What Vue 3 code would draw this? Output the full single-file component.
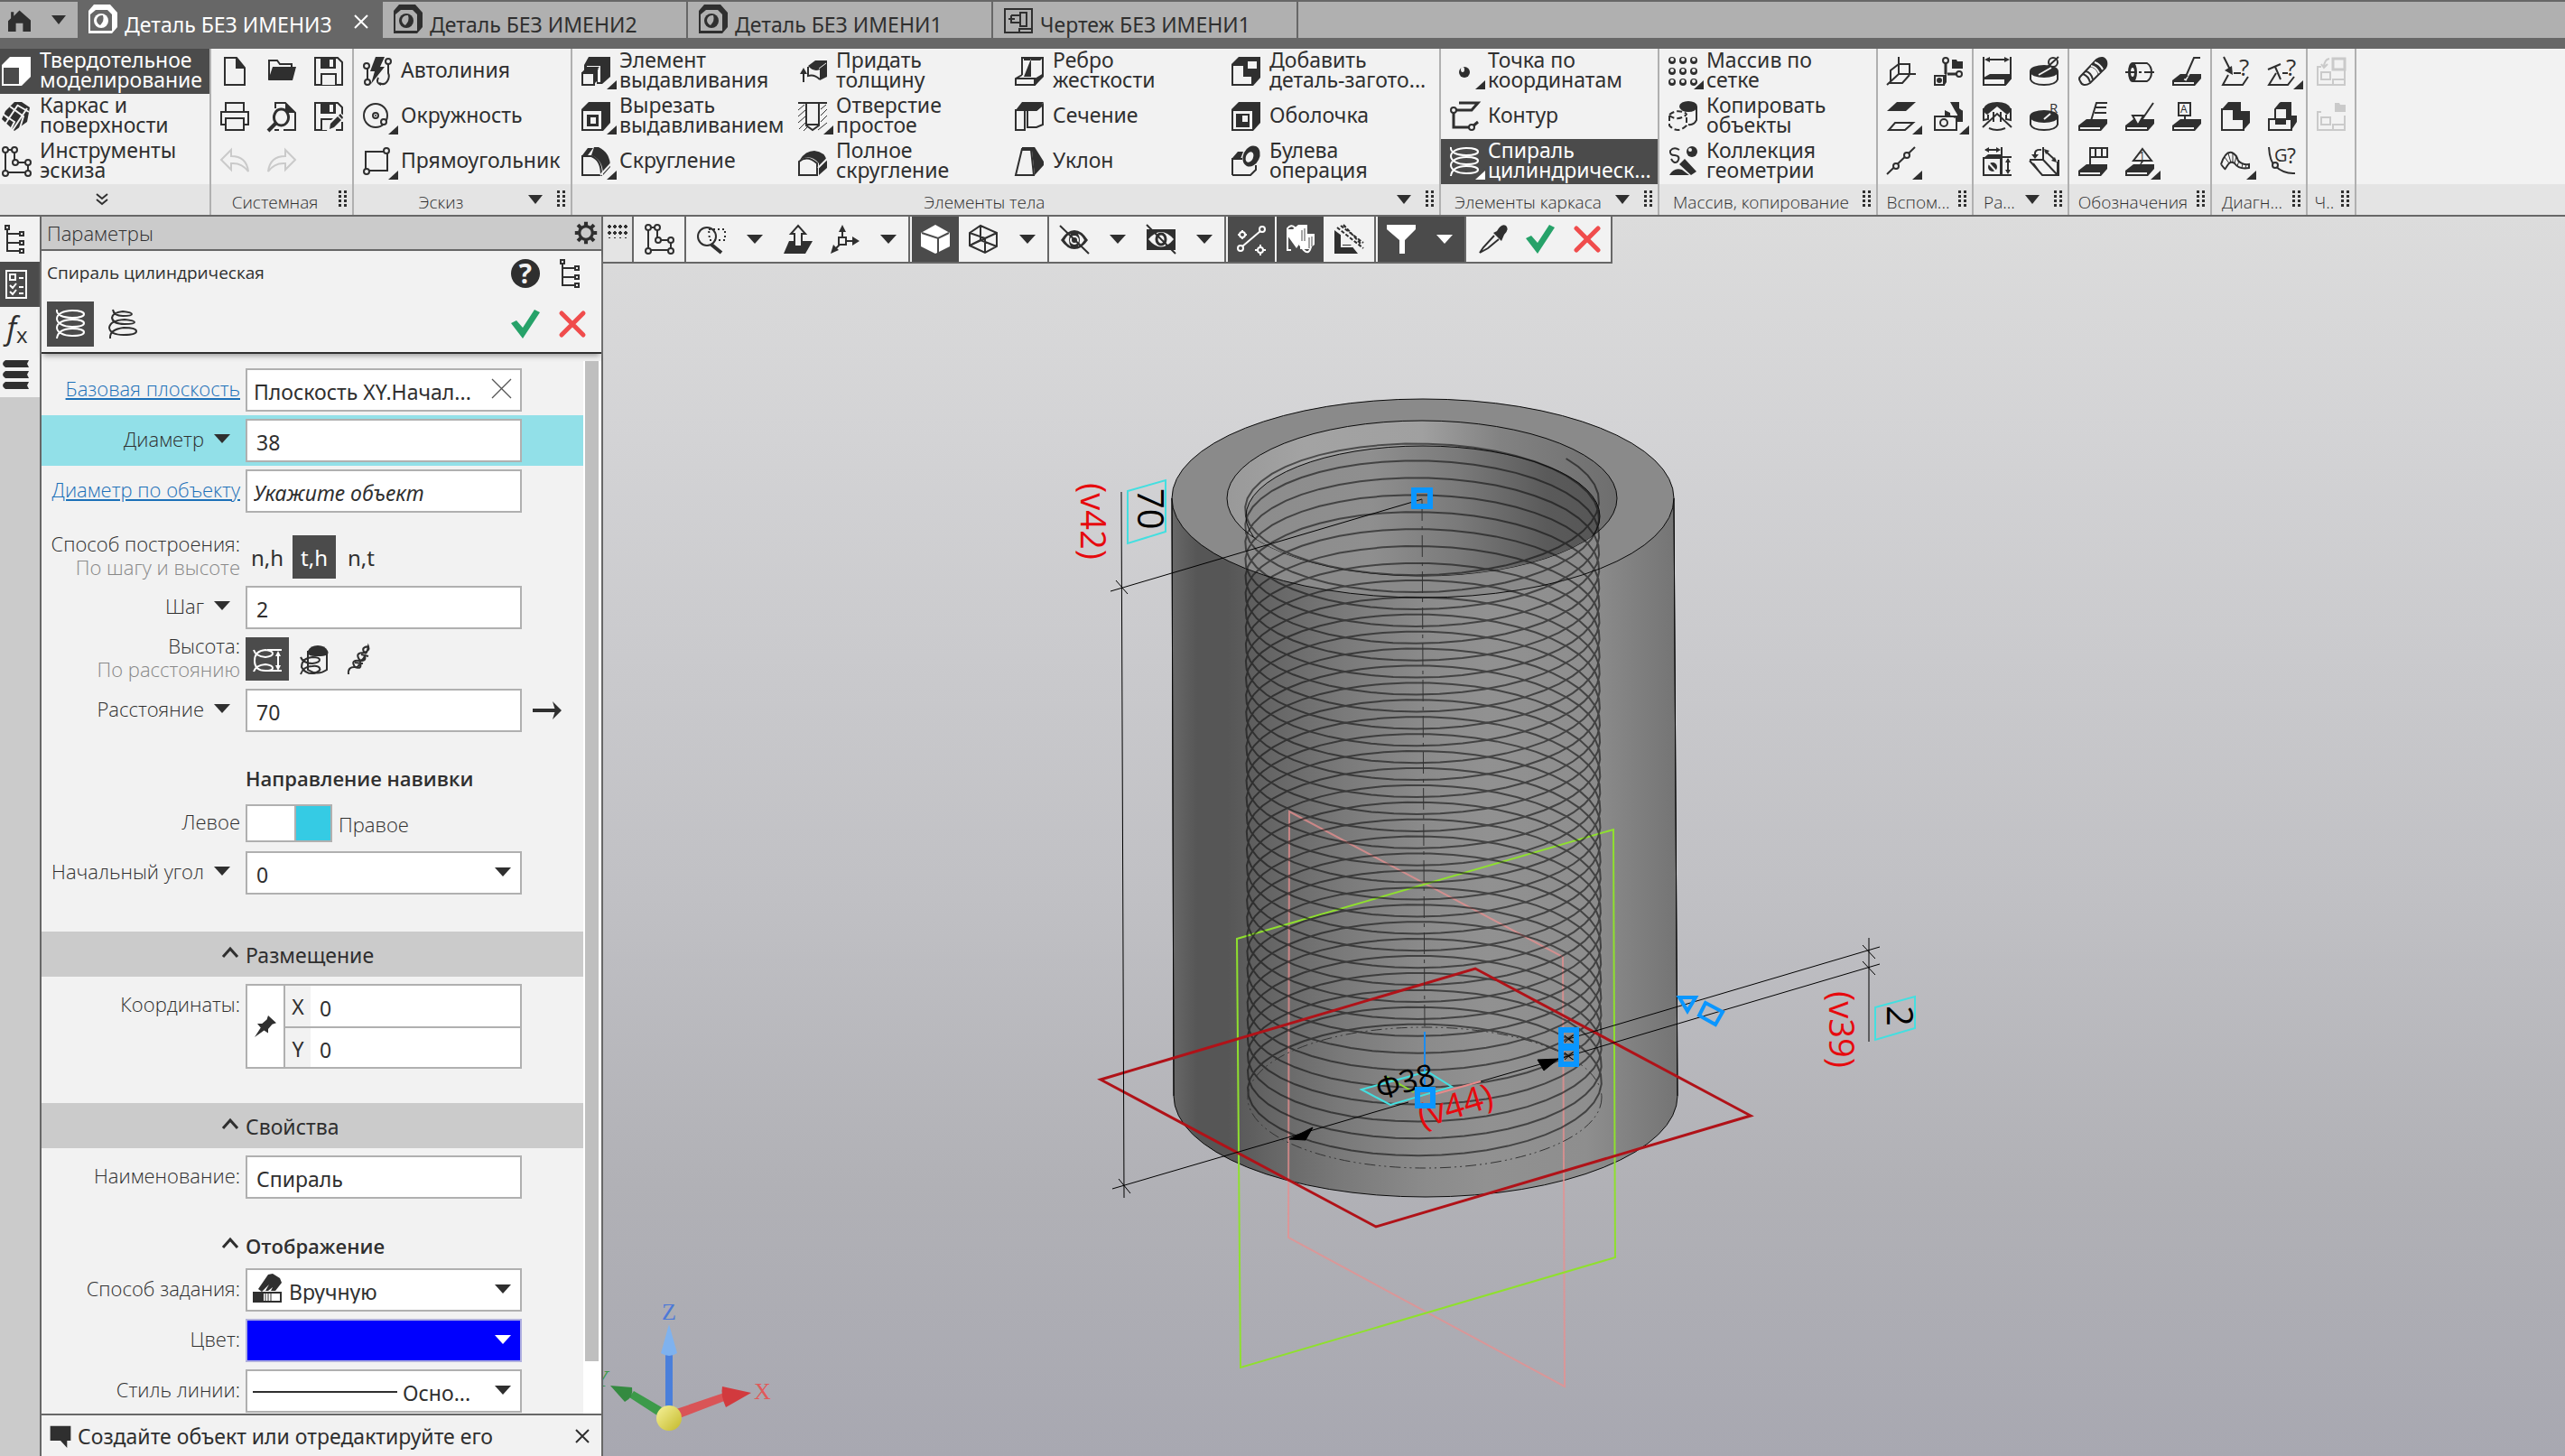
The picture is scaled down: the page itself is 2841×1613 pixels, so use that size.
<script setup>
import { ref } from 'vue'

/* ---- icon drawing helpers, all on a 32 x 32 grid ---- */
const s = (d, w = 2) => `<path d="${d}" stroke-width="${w}"/>`
const f = (d) => `<path d="${d}" fill="currentColor" stroke="none" fill-rule="evenodd"/>`
const b = (d, w = 2) => `<path d="${d}" fill="var(--bg)" stroke-width="${w}"/>`
const w = (d) => `<path d="${d}" fill="var(--bg)" stroke="none"/>`
const l = (d, k = 2) => `<path d="${d}" stroke="var(--bg)" stroke-width="${k}"/>`
const c = (x, y, r = 3) => `<circle cx="${x}" cy="${y}" r="${r}" fill="var(--bg)"/>`
const d = (x, y, r = 3) => `<circle cx="${x}" cy="${y}" r="${r}" fill="currentColor" stroke="none"/>`
const t = (x, y, k, v) => `<text x="${x}" y="${y}" font-size="${k}" fill="currentColor" stroke="none" font-family="Open Sans, sans-serif">${v}</text>`
const plate = f('M0 26L9 19H32V24L25 32H0z') + w('M2 28H24V30H2z')
const spiral = s('M1 0C0 6 8 9 18 9C27 9 31 7 31 5S27 1 18 1C8 1 1 5 1 10S8 19 18 19S31 17 31 15S27 11 18 11C8 11 1 15 1 20S8 29 18 29S31 27 31 25S27 21 18 21C8 21 2 24 1 32')
const sketch = s('M4 3H14V17L17 17H29V28H4z') + c(4, 3) + c(14, 3) + c(15, 17) + c(29, 17) + c(29, 29) + c(4, 29)
const floppy = s('M1 1H26L31 6V31H1z') + f('M7 1H24V13H7z') + w('M17 3H21V11H17z') + b('M8 31V19H24V31')
const sheet = s('M1 10V31H31V15M1 11H5M18 31V25H31') + s('M5 17H15V25H5z')
const chest = f('M8 0H32V23L24 32H0V8z')

const icons = {
  home: f('M16 2L8 10V4H4V13L0 17V32H11V20H21V32H32V16z'),
  part: f('M6 0H24L32 9V25L26 32H0V7z') + w('M2 11L8 6H21L26 11V29H2z') + d(14, 18, 8) + w('M9 17A6 6 0 0 1 16 12Q18 18 13 23Q9 21 9 17z'),
  drawing: s('M1 5H31V31H1z') + s('M5 16H12M8 12H18V20H8V12M18 9H25V24H18zM17 31V27H31'),
  solid: f('M9 0H32V22L22 32H0V9z') + w('M2 12H19V30H2z'),
  surface: f('M14 0L22 0L31 6L28 22L14 32L0 19L4 10z') + l('M9 5L24 16L20 29M2 14L14 22L10 30M30 11L18 4M4 24L18 3M12 31L28 7M0 12L8 19'),
  sketch,
  file: s('M5 1H18L27 12V31H5z') + f('M17 1L28 13H17z'),
  folder: s('M2 25V4H11L14 8H27V13') + f('M4 26L1 26L6 11H32L28 26z'),
  save: floppy,
  saveas: floppy + w('M14 32L16 23L28 11L34 16V32z') + f('M17 30L18 24L26 16L30 20L22 28zM27 15L29 13L32 17L31 19z') + s('M31 22V31H24'),
  print: s('M6 11V1H26V11M6 25H1V11H31V25H26') + s('M6 18H26V31H6z'),
  preview: s('M9 7V1H20L31 12V31H18M8 31H13') + f('M20 1L31 12H20z') + b('M16 8A8 9 0 1 1 15 8z', 3) + s('M10 23L1 32', 4),
  undo: s('M12 3L1 14L12 25V18Q24 17 31 27Q29 10 12 10z'),
  redo: s('M20 3L31 14L20 25V18Q8 17 1 27Q3 10 20 10z'),
  autoline: s('M5 8L5 27M5 27Q5 30 9 28M28 6V18Q30 22 27 27Q24 32 18 29') + f('M14 0H24L19 11H24L9 30L13 16H8z') + c(4, 10, 3) + c(5, 28, 3) + c(28, 5, 3) + s('M17 23Q14 29 20 31'),
  circle: `<circle cx="14" cy="15" r="13"/>` + c(14, 15, 3) + d(14, 15, 1) + c(23, 22, 3),
  rect: s('M3 5H27V26H3z') + c(26, 4, 3) + c(4, 27, 3),
  extrude: f('M8 0H32V22L23 30H17V15H3V9z') + w('M6 10H21V28H18V13L20 11H6z') + b('M1 18L5 14H17L14 18V31H1z') + f('M1 18L6 13H18V26L14 30V18z') + s('M1 18H14V31H1z'),
  cut: chest + w('M2 10H22V30H2z') + f('M6 14H19V27H6z') + w('M10 17H16V24H10z'),
  fillet: s('M1 31V10H11Q22 14 22 31z') + f('M1 9L7 1H13L7 9zM14 0H19Q32 6 32 22L24 31Q24 14 11 9z') + l('M21 31L33 18', 2),
  thicken: s('M6 28V16') + f('M6 12L10 19H2z') + f('M11 10L19 4H32V22L24 26V14Q17 17 11 10z') + s('M11 11V21Q18 19 24 25') + l('M23 13L31 7', 1),
  hole: s('M0 1H32', 2) + s('M9 1V26L16 31L23 26V1M9 25H23', 2) + s('M0 9L7 3M0 16L8 9M0 23L8 16M1 30L9 22M6 32L10 28M25 8L31 3M25 15L32 8M25 22L32 15M22 31L32 23', 1),
  fullround: s('M1 31V16Q10 8 21 18V31z') + f('M2 14Q8 4 18 4Q30 5 32 16V23L23 31V18Q14 7 2 14z') + l('M22 23L33 12'),
  rib: s('M8 20V1H31V20L22 31H1V24L8 20M1 24H22V31') + f('M22 24L32 18V22L22 32zM18 2L10 22H18zM10 1H31L28 4H10z'),
  section: s('M1 9H11V31H1zM14 9H24L31 3V25L24 28H14z') + f('M1 9L8 0H32L25 9H16L14 10H11z'),
  draft: s('M8 2L1 31H21L18 3z') + f('M8 0H22L32 16V20L22 31L19 4H8z'),
  addpart: chest + w('M2 10H13V22H22V30H2zM18 5H28V13H18z') + f('M13 9H17V17H22V22H13z'),
  shell: chest + w('M2 10H23V30H2z') + f('M5 13H20V28H5z') + w('M12 15H18V22H12z'),
  boolean: s('M1 31V13H12M1 31H21L27 25V20') + f('M1 12L7 5H13L10 13z') + `<ellipse cx="22" cy="10" rx="8" ry="11" transform="rotate(25 22 10)" fill="currentColor"/><ellipse cx="20" cy="11" rx="4" ry="6" transform="rotate(25 20 11)" fill="var(--bg)" stroke="none"/>`,
  point: d(16, 17, 6) + `<ellipse cx="14" cy="14" rx="2" ry="3" fill="var(--bg)" stroke="none"/>`,
  contour: s('M10 1H31L24 9H4V28H25M24 28L31 22', 3) + c(4, 9, 3) + c(24, 28, 3),
  spiral,
  array: [4, 16, 28].map((y) => [4, 16, 28].map((x) => d(x, y, 4) + `<circle cx="${x}" cy="${y - 1}" r="2" fill="var(--bg)" stroke="none"/>`).join('')).join(''),
  copy: `<path d="M1 15V26Q10 36 20 26V13M1 14Q10 7 20 13M1 15Q10 22 20 14" stroke-dasharray="6 3"/>` + s('M31 5V20Q28 26 22 25') + `<ellipse cx="22" cy="5" rx="9" ry="5" fill="currentColor"/>`,
  collect: s('M12 3Q6 -1 2 4Q1 9 7 9Q14 10 10 16Q6 19 3 13') + d(26, 5, 6) + `<circle cx="24" cy="3" r="2" fill="var(--bg)" stroke="none"/>` + f('M12 19L18 13L31 27L25 31zM1 31Q6 22 15 25L23 31z'),
  lcs: s('M13 0V19L0 31M13 19H32M13 8H25V19M13 8L4 15V29H17L25 20', 2),
  csys: s('M13 7V19M15 19H25', 3) + c(13, 4, 3) + c(28, 19, 3) + s('M1 21H11V31H1z') + d(6, 26, 3) + f('M20 3H25L26 5H32V13H20zM12 20L14 18V28L12 31z'),
  plane: f('M11 0H32L21 10H0z') + s('M9 23H29L20 31H2z'),
  camera: f('M18 0H28V7L32 10V21H26V14L23 9zM12 9L18 12V15H12z') + f('M12 10L23 18L32 9V22H24V15H12z') + s('M1 16H25V31H1z') + `<circle cx="11" cy="23" r="4"/>`,
  axis: s('M0 30L31 0') + c(10, 21, 3) + c(22, 9, 3),
  dimlin: s('M1 0V31H25L31 24V0M4 3H28M1 24H25V31') + f('M1 23L8 19H32L25 25H1zM25 25L32 19V24L26 31zM2 3L8 0V6zM30 3L24 0V6z'),
  dimdia: s('M1 16V25Q3 31 16 31Q29 31 31 25V16') + `<ellipse cx="16" cy="16" rx="15" ry="6" fill="currentColor"/><circle cx="26" cy="6" r="5"/>` + s('M20 11L32 0') + l('M10 20L24 12'),
  dimang: f('M1 7Q4 0 16 0Q28 0 31 7Q31 12 27 14L16 5L5 14Q0 11 1 7z') + s('M1 7V20L6 19V14M31 7V20L26 19V14M12 11V22M20 11V22') + s('M0 28L16 13L32 28M7 29Q16 33 25 29'),
  dimrad: s('M1 16V25Q3 31 16 31Q29 31 31 25V16') + `<ellipse cx="16" cy="16" rx="15" ry="6" fill="currentColor"/>` + t(22, 12, 15, 'R') + l('M16 19L23 13'),
  dimbox: s('M1 11V31H21V12H1', 2) + f('M1 12L6 8H22V31H19V13H1z') + s('M21 0V31M21 11H32M21 31H32M3 3H18M28 13V28') + f('M2 3L7 0V6zM20 3L15 0V6zM28 12L25 17H31zM28 30L25 25H31z') + d(11, 22, 5) + l('M6 17L16 28'),
  dim3: s('M15 0V14L31 31M15 14H0M0 15L14 31H32V14M31 16V31M17 4L29 15M4 18L12 29M13 3Q5 2 6 9') + f('M2 8H10L6 13zM16 2L22 4L18 8zM30 17L28 11L24 15z'),
  thread: s('M2 22L20 3Q28 -2 31 5Q32 9 30 12L13 29Q5 34 2 27Q0 24 2 22z') + f('M12 11L20 3Q28 -2 31 5Q32 9 30 12L22 20Q20 12 12 11z') + l('M14 10Q20 11 23 18M18 6Q24 8 27 14') + s('M8 16Q14 17 16 25M5 19Q11 21 13 28'),
  cylaxis: s('M8 7H24Q29 10 29 17Q29 24 24 27H8') + `<ellipse cx="8" cy="17" rx="4" ry="10" fill="currentColor"/><ellipse cx="8" cy="17" rx="2" ry="5" fill="var(--bg)" stroke="none"/>` + s('M0 17H12M15 17H18M21 17H32'),
  leader: plate + l('M14 26L20 15', 3) + s('M31 1H24L14 24') + f('M11 26L13 19L18 21z'),
  brand: plate + s('M13 24L20 1H32M19 6H31M18 12H31') + f('M11 26L12 19L17 21z'),
  rough: plate + b('M8 15H20L14 26z') + s('M14 26L31 1'),
  base: plate + b('M7 1H20V15H7z') + t(9, 12, 12, 'A') + s('M14 15V21') + f('M14 20L22 25H6z'),
  tolerance: plate + b('M13 1H32V11H13zM19 1V11M26 1V11') + s('M13 11V23') + f('M13 20L22 25H5z'),
  marking: plate + b('M19 2L29 15H9z') + t(15, 14, 12, '1') + f('M12 27L13 20L18 22zM15 22L20 16L18 15z'),
  check1: s('M8 20L2 31H24L30 22M3 0L11 16M14 18H22') + f('M13 20L12 10L4 15z') + t(20, 21, 26, '?'),
  check2: s('M9 18L1 31H22L29 22M0 14L14 8M8 11L14 25M16 18H22') + t(20, 21, 26, '?'),
  lbox: s('M1 8H14V19H25V31H1z') + f('M1 8L8 0H22V10H32V23L25 31V18H14V8z'),
  ubox: s('M1 19H26V31H1z') + s('M8 19V8L14 1') + f('M8 8L14 0H26V15H32V22L26 31V19H20V8z') + f('M8 19H20V25H8z') + w('M10 8H18V18H10z'),
  zebra: s('M0 19Q5 4 12 6Q17 8 19 15Q24 20 31 19V23Q20 25 15 18Q11 15 8 19L4 25M0 19L4 24', 2) + s('M4 11L9 18M8 7L11 17M13 6L13 17M17 10L15 18M20 15L18 21M24 18L23 23M28 19L27 23', 1),
  gcheck: s('M1 0Q2 16 8 21Q18 30 30 29') + c(8, 20, 3) + t(7, 16, 20, 'G') + t(21, 18, 23, '?'),
  up1: sheet + s('M18 2H31V14H18z', 3) + s('M14 2Q8 3 8 12M5 8L8 12L12 8'),
  up2: sheet + f('M20 1H25L26 3H32V11H20z'),
  tree: s('M5 4V29H20M5 10H20M5 20H20') + b('M3 1H7V5H3zM19 8H23V12H19zM19 18H23V22H19zM19 27H23V31H19z'),
  params: s('M4 1H26V31H4z') + s('M8 5H14V11H8zM18 9H23M8 17L11 20L15 15M18 19H23M8 24L11 27L15 22M18 26H23'),
  books: f('M3 0H29L27 4L29 8H3Q0 6 0 4T3 0zM3 12H29L27 16L29 20H3Q0 18 0 16T3 12zM3 24H29L27 28L29 32H3Q0 30 0 28T3 24z'),
  gear: `<circle cx="16" cy="16" r="9" stroke-width="4"/>` + s('M16 1V6M16 26V31M1 16H6M26 16H31M5 5L9 9M23 23L27 27M5 27L9 23M23 9L27 5', 5),
  help: d(16, 16, 16) + `<text x="16" y="27" text-anchor="middle" font-size="30" font-weight="700" fill="var(--bg)" stroke="none" font-family="Open Sans, sans-serif">?</text>`,
  cone: s('M5 0Q6 7 16 7Q26 7 26 5T16 2Q5 3 4 9Q5 16 18 16Q29 16 29 14T18 11Q2 12 1 20Q2 28 17 28Q31 28 31 24T17 20Q1 22 2 32'),
  ok: `<path d="M0 15L6 12L13 20L26 0L32 3L13 32z" fill="#26a269" stroke="none"/>`,
  cancel: `<path d="M4 4L28 28M28 4L4 28" stroke="#f04c4c" stroke-width="5" stroke-linecap="round"/>`,
  hdist: s('M1 5Q3 12 14 13Q22 12 22 9T14 5Q2 6 2 17T14 28Q22 28 22 25T14 21Q3 22 1 29M16 5H32M16 28H32M28 9V25') + f('M28 6L31 12H25zM28 28L31 22H25z'),
  hobj: s('M9 6V27Q20 34 30 27V6') + f('M9 6Q12 0 20 0T31 6T20 12T9 6z') + s('M1 13Q4 20 14 20Q22 19 22 16T14 13Q2 14 2 24Q6 32 16 31Q24 28 22 25T14 23Q4 23 1 32'),
  hpath: s('M24 1Q16 2 19 7T24 1Q26 6 19 8Q10 8 13 14T20 12Q22 18 14 17Q5 16 8 22T15 19Q17 27 10 24Q1 23 2 32M16 10L24 12M9 19L18 20'),
  arrow: s('M0 16H28', 4) + f('M22 6L32 16L22 26L25 16z'),
  pin: f('M20 0L32 11L26 13L20 20L20 26L14 22L0 32L9 18L4 12L11 12L18 6z'),
  hand: f('M6 17L17 1L22 0L30 5L32 10L25 19H20L22 15L17 19H14L18 12L10 20z') + s('M1 21H31V31H1z') + f('M1 21H12V31H1z') + s('M14 22V31M17 22V31M20 22V31', 1),
  bubble: f('M2 2H30V22H25V32L16 22H2z'),
  zoom: `<circle cx="11" cy="13" r="10"/>` + s('M16 22L27 31', 4) + `<path d="M13 5H31V17H14z" stroke-dasharray="2 3"/>`,
  place: f('M6 18H32L24 32H0z') + b('M12 24V10H8L16 1L24 10H20V24z'),
  triad: s('M13 15V4M17 18H26M10 22L4 28') + f('M13 0L17 8H9zM32 18L24 13V23zM0 32L3 22L9 28z') + b('M9 14H17V22H9z'),
  cube: f('M16 0L32 9V24L16 32L0 24V9z') + l('M1 9L19 15L31 9M19 15V31'),
  wire: s('M13 1L31 9V24L18 31L1 23V9zM13 1V17L1 23M13 17L31 24M1 9L18 15L31 9M18 15V31M1 23L31 9'),
  hide: f('M1 17Q8 6 16 6T31 17Q24 27 16 27T1 17z') + w('M5 17Q8 11 12 10Q8 17 12 24Q8 22 5 17zM27 17Q24 11 20 10Q24 17 20 24Q24 22 27 17z') + `<circle cx="16" cy="17" r="4" stroke="var(--bg)"/>` + s('M0 1L32 32'),
  hide2: f('M0 5H32V28H0z') + `<path d="M2 16Q16 0 30 16Q16 33 2 16z" fill="var(--bg)" stroke="none"/><ellipse cx="16" cy="16" rx="5" ry="6" stroke-width="3"/>` + s('M0 0L32 32'),
  snap: s('M6 24L26 7') + c(28, 5, 3) + c(4, 26, 3) + c(6, 11, 3) + c(26, 28, 3) + s('M6 6V8M6 14V16M1 11H3M9 11H11M26 22V25M26 31V34M20 28H23M29 28H32'),
  faces: f('M8 5L14 0H24V10H32V22L26 27H16V20L12 26L2 12V5z') + s('M6 28H2V4Q6 -1 10 3V14L20 28Q26 34 28 24') + l('M18 6V18M21 4V18M26 14V26M29 13V24', 1),
  shade: f('M0 6L8 12V22H18L26 32H0z') + l('M8 10V24H20') + `<path d="M3 3L32 26M7 1L32 20M10 0L30 22" stroke-dasharray="4 2"/>`,
  filter: f('M0 0H32V5L20 17V32H14V17L0 5z'),
  pipette: f('M20 7Q25 -2 30 1Q34 5 28 11L25 18L16 9z') + s('M17 12L5 25L1 31L10 26L22 16'),
}

const tabs = [
  { icon: 'part', text: 'Деталь БЕЗ ИМЕНИ3', on: true },
  { icon: 'part', text: 'Деталь БЕЗ ИМЕНИ2' },
  { icon: 'part', text: 'Деталь БЕЗ ИМЕНИ1' },
  { icon: 'drawing', text: 'Чертеж БЕЗ ИМЕНИ1' },
]

const I = (icon, text = '', more = false, on = false) => ({ icon, text, more, on })
const modes = [
  I('solid', 'Твердотельное\nмоделирование', false, true),
  I('surface', 'Каркас и\nповерхности'),
  I('sketch', 'Инструменты\nэскиза'),
]
const groups = [
  { title: 'Системная', kind: 'n3', items: [I('file'), I('folder'), I('save'), I('print'), I('preview'), I('saveas'), I('undo'), I('redo')] },
  { title: 'Эскиз', kind: 'w1', drop: true, items: [I('autoline', 'Автолиния'), I('circle', 'Окружность', true), I('rect', 'Прямоугольник', true)] },
  {
    title: 'Элементы тела', kind: 'w4', drop: true,
    items: [
      I('extrude', 'Элемент\nвыдавливания', true), I('thicken', 'Придать\nтолщину'), I('rib', 'Ребро\nжесткости'), I('addpart', 'Добавить\nдеталь-загото...'),
      I('cut', 'Вырезать\nвыдавливанием', true), I('hole', 'Отверстие\nпростое', true), I('section', 'Сечение'), I('shell', 'Оболочка'),
      I('fillet', 'Скругление', true), I('fullround', 'Полное\nскругление'), I('draft', 'Уклон'), I('boolean', 'Булева\nоперация'),
    ],
  },
  { title: 'Элементы каркаса', kind: 'w1', drop: true, items: [I('point', 'Точка по\nкоординатам', true), I('contour', 'Контур'), I('spiral', 'Спираль\nцилиндрическ...', true, true)] },
  { title: 'Массив, копирование', kind: 'w1', items: [I('array', 'Массив по\nсетке', true), I('copy', 'Копировать\nобъекты'), I('collect', 'Коллекция\nгеометрии')] },
  { title: 'Вспом...', kind: 'n2', items: [I('lcs'), I('csys'), I('plane', '', true), I('camera', '', true), I('axis', '', true)] },
  { title: 'Ра...', kind: 'n2', drop: true, items: [I('dimlin'), I('dimdia'), I('dimang'), I('dimrad'), I('dimbox'), I('dim3')] },
  { title: 'Обозначения', kind: 'n3', items: [I('thread'), I('cylaxis'), I('leader'), I('brand'), I('rough'), I('base'), I('tolerance'), I('marking', '', true)] },
  { title: 'Диагн...', kind: 'n2', items: [I('check1'), I('check2', '', true), I('lbox'), I('ubox'), I('zebra', '', true), I('gcheck')] },
  { title: 'Ч..', kind: 'n1', items: [I('up1'), I('up2')] },
]
const faded = ['undo', 'redo', 'up1', 'up2']

const bars = [
  [I('sketch')],
  [I('zoom'), 'v', I('place'), I('triad'), 'v'],
  [I('cube', '', false, true), I('wire'), 'v'],
  [I('hide'), 'v', I('hide2'), 'v'],
  [I('snap', '', false, true), I('faces', '', false, true), I('shade')],
  [I('filter', '', false, true), 'w'],
  [I('pipette'), I('ok'), I('cancel')],
]

const form = ref({ plane: 'Плоскость XY.Начал...', dia: '38', step: '2', dist: '70', right: true, angle: '0', x: '0', y: '0', name: 'Спираль' })

/* helix: 35 turns between the two end planes of the bore */
const helix = (() => {
  const pts = []
  const turns = 35
  const a0 = -35.5
  for (let i = 0; i <= turns * 48; i++) {
    const k = i / 48
    const q = k / turns
    const a = ((a0 - 360 * k) * Math.PI) / 180
    pts.push((1578 - 3 * q + 196 * Math.cos(a)).toFixed(1) + ' ' + (1215 - 662 * q + 77.5 * Math.sin(a)).toFixed(1))
  }
  return 'M' + pts.join('L')
})()
</script>

<template>
  <div class="app">
    <header class="tabs">
      <div class="home">
        <button type="button" aria-label="Главная"><svg class="ic home-ic" viewBox="0 0 32 32" v-html="icons.home" /></button>
        <button type="button" aria-label="Меню"><i class="tri" /></button>
      </div>
      <div v-for="tab in tabs" :key="tab.text" class="tab" :class="{ on: tab.on }">
        <svg class="ic" viewBox="0 0 32 32" v-html="icons[tab.icon]" />
        <span>{{ tab.text }}</span>
        <button v-if="tab.on" type="button" class="x" aria-label="Закрыть"><svg viewBox="0 0 16 16"><path d="M1 1L15 15M15 1L1 15" /></svg></button>
      </div>
      <div class="tab-rest" />
    </header>

    <nav class="ribbon">
      <section class="group modes">
        <div class="cells">
          <button v-for="m in modes" :key="m.icon" type="button" class="cell wide" :class="{ on: m.on }">
            <svg class="ic" viewBox="0 0 32 32" v-html="icons[m.icon]" /><span>{{ m.text }}</span>
          </button>
        </div>
        <div class="cap"><button type="button" class="chev" aria-label="Развернуть"><svg viewBox="0 0 16 14"><path d="M2 1L8 6L14 1M2 7L8 12L14 7" /></svg></button></div>
      </section>
      <section v-for="g in groups" :key="g.title" class="group" :class="g.kind">
        <div class="cells">
          <button v-for="it in g.items" :key="it.icon" type="button" class="cell" :class="{ wide: it.text, on: it.on, faded: faded.includes(it.icon) }" :aria-label="it.text || it.icon">
            <span class="icbox">
              <svg class="ic" viewBox="0 0 32 32" v-html="icons[it.icon]" />
              <svg v-if="it.more" class="more" viewBox="0 0 14 14"><path d="M14 0V14H0z" class="halo" /><path d="M13 3V13H2z" /></svg>
            </span>
            <span v-if="it.text">{{ it.text }}</span>
          </button>
        </div>
        <div class="cap">
          <span class="title">{{ g.title }}</span>
          <i v-if="g.drop" class="tri" />
          <i class="grip" />
        </div>
      </section>
      <div class="ribbon-rest"><div class="cap" /></div>
    </nav>

    <main class="main">
      <aside class="rail">
        <button type="button" aria-label="Дерево"><svg class="ic" viewBox="0 0 32 32" v-html="icons.tree" /></button>
        <button type="button" class="on" aria-label="Параметры"><svg class="ic" viewBox="0 0 32 32" v-html="icons.params" /></button>
        <button type="button" class="fx">f<sub>x</sub></button>
        <button type="button" aria-label="Библиотеки"><svg class="ic" viewBox="0 0 32 32" v-html="icons.books" /></button>
      </aside>

      <section class="panel">
        <div class="phead"><span>Параметры</span><button type="button" aria-label="Настройка"><svg class="ic gear" viewBox="0 0 32 32" v-html="icons.gear" /></button></div>
        <div class="ptitle">
          <div class="line">
            <span class="name">Спираль цилиндрическая</span>
            <button type="button" class="sq" aria-label="Справка"><svg class="ic" viewBox="0 0 32 32" v-html="icons.help" /></button>
            <button type="button" class="sq" aria-label="Дерево"><svg class="ic" viewBox="0 0 32 32" v-html="icons.tree" /></button>
          </div>
          <div class="line">
            <button type="button" class="sq on" aria-label="Цилиндрическая"><svg class="ic" viewBox="0 0 32 32" v-html="icons.spiral" /></button>
            <button type="button" class="sq" aria-label="Коническая"><svg class="ic" viewBox="0 0 32 32" v-html="icons.cone" /></button>
            <span class="grow" />
            <button type="button" class="sq" aria-label="Создать"><svg class="ic" viewBox="0 0 32 32" v-html="icons.ok" /></button>
            <button type="button" class="sq" aria-label="Отмена"><svg class="ic" viewBox="0 0 32 32" v-html="icons.cancel" /></button>
          </div>
        </div>

        <div class="pbody">
          <form class="form" @submit.prevent>
            <div class="row first">
              <a href="#plane" class="lab">Базовая плоскость</a>
              <div class="field"><input id="plane" v-model="form.plane" class="ref" aria-label="Базовая плоскость" /><button type="button" class="clear" aria-label="Очистить"><svg viewBox="0 0 16 16"><path d="M0 0L16 16M16 0L0 16" /></svg></button></div>
            </div>
            <div class="row hot">
              <label for="dia" class="lab arrowed">Диаметр<i class="tri" /></label>
              <div class="field"><input id="dia" v-model="form.dia" /></div>
            </div>
            <div class="row">
              <a href="#diaobj" class="lab">Диаметр по объекту</a>
              <div class="field"><input id="diaobj" class="ref" placeholder="Укажите объект" aria-label="Диаметр по объекту" /></div>
            </div>
            <div class="row gap">
              <div class="lab two">Способ построения:<small>По шагу и высоте</small></div>
              <div class="picks"><button type="button">n,h</button><button type="button" class="on">t,h</button><button type="button">n,t</button></div>
            </div>
            <div class="row">
              <label for="step" class="lab arrowed">Шаг<i class="tri" /></label>
              <div class="field"><input id="step" v-model="form.step" /></div>
            </div>
            <div class="row tall">
              <div class="lab two">Высота:<small>По расстоянию</small></div>
              <div class="picks">
                <button v-for="(n, i) in ['hdist', 'hobj', 'hpath']" :key="n" type="button" :class="{ on: i === 0 }" :aria-label="n"><svg class="ic" viewBox="0 0 32 32" v-html="icons[n]" /></button>
              </div>
            </div>
            <div class="row">
              <label for="dist" class="lab arrowed">Расстояние<i class="tri" /></label>
              <div class="field"><input id="dist" v-model="form.dist" /></div>
              <button type="button" class="dir" aria-label="Сменить направление"><svg class="ic" viewBox="0 0 32 32" v-html="icons.arrow" /></button>
            </div>
            <h3 class="sub winding"><span>Направление навивки</span></h3>
            <div class="row toggle">
              <label for="dirsw" class="lab">Левое</label>
              <div class="sw"><input id="dirsw" v-model="form.right" type="checkbox" /><label for="dirsw">Правое</label></div>
            </div>
            <div class="row">
              <label for="angle" class="lab arrowed">Начальный угол<i class="tri" /></label>
              <div class="field"><input id="angle" v-model="form.angle" /><i class="tri in" /></div>
            </div>
            <h3 class="band b1"><svg viewBox="0 0 20 14"><path d="M2 12L10 3L18 12" /></svg><span>Размещение</span></h3>
            <div class="row coords">
              <div class="lab">Координаты:</div>
              <div class="xy">
                <button type="button" aria-label="Закрепить"><svg viewBox="0 0 32 32" class="ic pin" v-html="icons.pin" /></button>
                <div class="pair">
                  <div class="co"><label for="cx">X</label><input id="cx" v-model="form.x" /></div>
                  <div class="co"><label for="cy">Y</label><input id="cy" v-model="form.y" /></div>
                </div>
              </div>
            </div>
            <h3 class="band b2"><svg viewBox="0 0 20 14"><path d="M2 12L10 3L18 12" /></svg><span>Свойства</span></h3>
            <div class="row">
              <label for="nm" class="lab">Наименование:</label>
              <div class="field"><input id="nm" v-model="form.name" /></div>
            </div>
            <h3 class="sub view"><svg viewBox="0 0 20 14"><path d="M2 12L10 3L18 12" /></svg><span>Отображение</span></h3>
            <div class="row">
              <label for="how" class="lab">Способ задания:</label>
              <div class="field"><select id="how" class="iconed"><option>Вручную</option></select><svg class="ic lead" viewBox="0 0 32 32" v-html="icons.hand" /><i class="tri in" /></div>
            </div>
            <div class="row">
              <label for="col" class="lab">Цвет:</label>
              <div class="field"><select id="col" class="blue"><option></option></select><i class="tri in white" /></div>
            </div>
            <div class="row">
              <label for="sty" class="lab">Стиль линии:</label>
              <div class="field"><select id="sty" class="lined"><option>Осно...</option></select><i class="stroke" /><i class="tri in" /></div>
            </div>
          </form>
          <div class="scroll"><i /></div>
        </div>

        <footer class="hint">
          <svg class="ic" viewBox="0 0 32 32" v-html="icons.bubble" />
          <span>Создайте объект или отредактируйте его</span>
          <button type="button" aria-label="Закрыть"><svg viewBox="0 0 16 16"><path d="M1 1L15 15M15 1L1 15" /></svg></button>
        </footer>
      </section>

      <section class="view3d">
        <svg class="scene" viewBox="668 240 2173 1373" preserveAspectRatio="xMinYMin slice">
          <defs>
            <linearGradient id="wall" x1="0" x2="1" y1="0" y2="0">
              <stop offset="0" stop-color="#686868" /><stop offset=".05" stop-color="#565656" /><stop offset=".11" stop-color="#565656" />
              <stop offset=".2" stop-color="#666" /><stop offset=".34" stop-color="#7a7a7a" /><stop offset=".5" stop-color="#8b8b8b" />
              <stop offset=".62" stop-color="#919191" /><stop offset=".82" stop-color="#8e8e8e" /><stop offset="1" stop-color="#747474" />
            </linearGradient>
            <linearGradient id="chamfer" x1="0" x2="1" y1="0" y2="0">
              <stop offset="0" stop-color="#999" /><stop offset=".2" stop-color="#a3a3a3" /><stop offset=".5" stop-color="#a0a0a0" /><stop offset=".7" stop-color="#828282" /><stop offset="1" stop-color="#6e6e6e" />
            </linearGradient>
            <linearGradient id="bore" x1="0" x2="1" y1="0" y2="0">
              <stop offset="0" stop-color="#8c8c8c" /><stop offset=".35" stop-color="#8f8f8f" /><stop offset=".6" stop-color="#7a7a7a" /><stop offset=".85" stop-color="#5a5a5a" /><stop offset="1" stop-color="#565656" />
            </linearGradient>
            <linearGradient id="ball" x1="0" x2="1" y1="0" y2="1"><stop offset="0" stop-color="#f6f29a" /><stop offset="1" stop-color="#c4b92a" /></linearGradient>
            <clipPath id="mouth"><ellipse cx="1575" cy="552" rx="216" ry="86" /></clipPath>
          </defs>

          <g class="edge">
            <path d="M1298 552L1300 1214A279 112 0 0 0 1858 1214L1854 552z" fill="url(#wall)" />
            <ellipse cx="1576" cy="552" rx="278" ry="110" fill="#8a8a8a" />
            <ellipse cx="1575" cy="552" rx="216" ry="86" fill="url(#chamfer)" />
            <ellipse cx="1576" cy="572" rx="196" ry="78" fill="url(#bore)" clip-path="url(#mouth)" />
            <path d="M1300 1214L1298 552M1858 1214L1854 552" />
          </g>
          <path class="plane-l" d="M1428 899L1731 1060L1733 1536L1427 1371z" stroke="#ea8f8f" stroke-width="2" opacity=".75" />
          <path class="plane-l" d="M1370 1040L1787 919L1789 1393L1374 1515z" stroke="#8fe02e" stroke-width="2" />
          <path class="helix" :d="helix" />
          <ellipse class="hidden-l" cx="1578" cy="1216" rx="196" ry="78" />
          <path d="M1219 1196L1634 1073L1939 1236L1524 1359z" fill="none" stroke="#b01218" stroke-width="3" />

          <g class="dim">
            <path d="M1575 553L1230 655M1242 545L1245 1327M1232 1317L1560 1221M1640 1198L1737 1170" />
            <path d="M1236 643L1249 658M1239 1306L1252 1322" />
            <path d="M1737 1151L2082 1049M1737 1170L2082 1068M2070 1039V1154M2063 1047L2077 1062M2063 1065L2077 1080" />
            <path d="M1575 553L1578 1140" stroke="#333" stroke-dasharray="24 6 4 6" />
            <path d="M1428 1262L1454 1249L1446 1263zM1726 1173L1703 1174L1710 1186z" fill="#000" />
          </g>
          <path d="M1578 1143V1204" stroke="#1c8cf0" stroke-width="2" />
          <path d="M1590 1212L1640 1198" stroke="#e88a8a" stroke-width="2" />
          <path d="M1536 1193L1566 1210" stroke="#8fe02e" stroke-width="2" />
          <g fill="none" stroke="#43dfe0" stroke-width="2">
            <path d="M1249 544L1291 532V589L1249 602z" />
            <path d="M2077 1116L2121 1104V1139L2077 1152z" />
            <path d="M1508 1207L1581 1187L1608 1204L1540 1224z" />
          </g>
          <g class="dimtext">
            <text transform="translate(1260 541) rotate(90)" font-size="40">70</text>
            <text transform="translate(2090 1114) rotate(90)" font-size="40">2</text>
            <text transform="translate(1528 1219) rotate(-16)" font-size="34">Φ38</text>
            <g fill="#e60a0e">
              <text transform="translate(1197 535) rotate(90)" font-size="38">(v42)</text>
              <text transform="translate(2026 1098) rotate(90)" font-size="38">(v39)</text>
              <text transform="translate(1575 1250) rotate(-17)" font-size="38">(v44)</text>
            </g>
          </g>
          <g class="handle">
            <rect x="1566" y="543" width="18" height="18" /><rect x="1570" y="1207" width="17" height="18" />
            <rect x="1729" y="1141" width="17" height="18" /><rect x="1729" y="1161" width="17" height="18" />
            <g stroke-width="4"><path d="M1860 1105H1878L1869 1120z" /><path d="M1889 1111L1908 1121L1900 1135L1882 1125z" /></g>
          </g>
          <path class="dim" d="M1733 1147L1742 1155M1742 1147L1733 1155M1733 1166L1742 1174M1742 1166L1733 1174" />

          <g class="triad" stroke="none">
            <path d="M737 1566V1498H745V1566z" fill="#4a7fdb" /><path d="M741 1467L750 1499Q741 1505 732 1499z" fill="#7fb2ee" />
            <path d="M746 1562L802 1543L805 1551L750 1572z" fill="#d95457" /><path d="M832 1543L800 1536Q798 1546 804 1559z" fill="#d23a3e" />
            <path d="M738 1562L702 1541L697 1548L734 1572z" fill="#3c9a4a" /><path d="M676 1535L700 1537Q702 1548 692 1553z" fill="#348a40" />
            <circle cx="741" cy="1571" r="14" fill="url(#ball)" />
            <text x="733" y="1462" fill="#4d79d8">Z</text><text x="835" y="1550" fill="#e05a5a">X</text><text x="657" y="1536" fill="#3c9a4a">Y</text>
          </g>
        </svg>

        <div class="toolbar">
          <i class="handle-grip" />
          <div v-for="(bar, i) in bars" :key="i" class="bar">
            <template v-for="(it, j) in bar" :key="j">
              <button v-if="typeof it === 'string'" type="button" class="dd" :class="{ on: it === 'w' }" aria-label="Список"><i class="tri" :class="{ white: it === 'w' }" /></button>
              <button v-else type="button" class="tb" :class="{ on: it.on }" :aria-label="it.icon"><svg class="ic" viewBox="0 0 32 32" v-html="icons[it.icon]" /></button>
            </template>
          </div>
        </div>
      </section>
    </main>
  </div>
</template>

<style>
body { margin: 0; }
</style>

<style scoped>
* { box-sizing: border-box; }
.app {
  --bg: #f2f2f2;
  display: flex; flex-direction: column; height: 100vh; overflow: hidden;
  background: #676767; color: #2f2f2f;
  font: 400 23px/22px "Noto Sans", "Open Sans", sans-serif;
}
button { font: inherit; color: inherit; background: none; border: 0; padding: 0; margin: 0; display: flex; align-items: center; justify-content: center; }
.ic { width: 32px; height: 32px; flex: none; fill: none; stroke: currentColor; stroke-width: 2; overflow: visible; display: block; }
.tri { width: 0; height: 0; border: 8px solid transparent; border-top: 10px solid #2f2f2f; border-bottom: 0; flex: none; }
.tri.white { border-top-color: #fff; }
.on { --bg: #4b4b4b; background: #4b4b4b; color: #fff; }

/* document tabs */
.tabs { display: flex; padding-top: 2px; height: 42px; flex: none; --bg: #b0b0b0; }
.home { display: flex; width: 86px; background: #b0b0b0; }
.home button { flex: 1; }
.home-ic { width: 25px; height: 25px; }
.tab { display: flex; align-items: center; width: 338px; padding: 4px 14px 0 12px; gap: 8px; background: #b0b0b0; border-right: 2px solid #676767; }
.tab span { padding-top: 6px; white-space: nowrap; flex: 1; }
.tab .ic { margin-top: -6px; }
.tab.on { --bg: #676767; background: #676767; }
.x svg, .hint button svg { width: 16px; height: 16px; stroke: currentColor; stroke-width: 2; }
.tab-rest { flex: 1; background: #b0b0b0; }

/* ribbon */
.ribbon { display: flex; flex: none; margin-top: 12px; border-bottom: 2px solid #676767; height: 186px; background: var(--bg); }
.group { display: flex; flex-direction: column; flex: none; border-right: 2px solid #b0b0b0; }
.cells { display: grid; grid-auto-rows: 50px; height: 150px; align-content: start; }
.modes .cells, .w1 .cells { grid-template-columns: 1fr; }
.modes { width: 234px; }
.w1 { width: 242px; }
.w4 { width: 962px; }
.w4 .cells { grid-template-columns: repeat(4, 1fr); }
.n1 .cells { grid-template-columns: 52px; }
.n2 .cells { grid-template-columns: repeat(2, 52px); }
.n3 .cells { grid-template-columns: repeat(3, 52px); }
.cell.wide { justify-content: flex-start; padding-left: 10px; gap: 10px; text-align: left; white-space: pre; }
.cell span { padding-bottom: 4px; }
.modes .cell.wide { padding-left: 2px; }
.icbox { position: relative; }
.cell .icbox { padding: 0; }
.more { position: absolute; left: 26px; top: 23px; width: 14px; height: 14px; fill: currentColor; }
.more .halo { fill: var(--bg); stroke: var(--bg); stroke-width: 2; }
.faded { color: #cacaca; }
.cap { display: flex; align-items: center; height: 34px; background: #e4e4e4; padding-right: 6px; font: 300 19px/22px "Open Sans", "Noto Sans", sans-serif; }
.cap .title { flex: 1; text-align: center; white-space: nowrap; padding-top: 6px; }
.cap .tri { margin-right: 16px; }
.grip { width: 9px; height: 20px; flex: none; background: repeating-linear-gradient(#2f2f2f 0 3px, #e4e4e4 3px 5px); position: relative; }
.grip::after { content: ""; position: absolute; left: 3px; top: 0; width: 3px; height: 20px; background: #e4e4e4; }
.chev { margin: auto; }
.chev svg { width: 16px; height: 14px; fill: none; stroke: currentColor; stroke-width: 2; }
.ribbon-rest { flex: 1; display: flex; flex-direction: column; justify-content: flex-end; }

/* left rail */
.main { display: flex; flex: 1; min-height: 0; }
.rail { width: 46px; flex: none; background: #cbcbcb; border-right: 2px solid #676767; }
.rail button { width: 44px; height: 50px; background: #f2f2f2; padding-right: 6px; }
.rail .on { background: #4b4b4b; }
.rail .fx { font: italic 34px/34px "Open Sans", sans-serif; align-items: baseline; padding-top: 6px; }
.fx sub { font-size: 24px; font-style: normal; vertical-align: baseline; position: relative; top: 4px; }

/* parameter panel */
.panel { width: 622px; flex: none; display: flex; flex-direction: column; background: var(--bg); border-right: 2px solid #676767; }
.phead { display: flex; justify-content: space-between; align-items: center; height: 38px; flex: none; padding: 0 4px 0 6px; background: #cbcbcb; border-bottom: 2px solid #676767; font: 300 22px/22px "Open Sans", "Noto Sans", sans-serif; }
.gear { width: 26px; height: 26px; }
.ptitle { flex: none; padding: 0 6px; height: 114px; border-bottom: 2px solid #2f2f2f; box-shadow: 0 4px 6px -2px #999; }
.line { display: flex; align-items: center; height: 50px; }
.line + .line { margin-top: 6px; }
.line .name { flex: 1; padding-bottom: 2px; font-family: "Open Sans", "Noto Sans", sans-serif; font-size: 19px; }
.sq { width: 52px; height: 50px; }
.sq.on + .sq { margin-left: 6px; }
.grow { flex: 1; }

.pbody { display: flex; flex: 1; min-height: 0; overflow: hidden; }
.form { flex: 1; line-height: 26px; }
.scroll { width: 20px; flex: none; margin-top: 8px; background: #fff; padding: 0 3px 0 2px; }
.scroll i { display: block; width: 15px; height: 95%; background: #bfbfbf; }
.row { display: grid; grid-template-columns: 226px 306px 1fr; padding: 4px 0; align-items: center; }
.first { margin-top: 12px; }
.hot { background: #92e0e8; }
.gap { margin-top: 17px; }
.tall { margin: 1px 0; }
.lab { text-align: right; padding: 0 6px 4px 0; font-family: "Open Sans", "Noto Sans", sans-serif; font-size: 22px; font-weight: 300; white-space: nowrap; }
a.lab { color: #1c70b8; text-decoration: underline; }
.arrowed { display: flex; justify-content: flex-end; align-items: center; gap: 11px; padding-right: 17px; }
.arrowed .tri { border-left-width: 9px; border-right-width: 9px; }
.two { padding-bottom: 0; margin-top: -4px; }
.two small { display: block; font-size: 22px; color: #888; }
.field { position: relative; height: 48px; }
.field input, .field select { width: 100%; height: 48px; border: 2px solid #b0b0b0; border-radius: 0; background: #fff; padding: 4px 10px 0; font: inherit; color: inherit; appearance: none; outline: 0; }
.field input.ref { padding-left: 7px; }
.field input::placeholder { color: #2f2f2f; font-style: italic; opacity: 1; }
.field select.iconed { padding-left: 46px; }
.field select.lined { padding-left: 172px; }
.field select.blue { background: #0000fe; border-color: #b0b0e0; }
.clear { position: absolute; right: 12px; top: 12px; }
.clear svg { width: 21px; height: 21px; stroke: #555; stroke-width: 1; overflow: visible; }
.tri.in { position: absolute; right: 12px; top: 18px; border-left-width: 9px; border-right-width: 9px; }
.lead { position: absolute; left: 8px; top: 6px; }
.stroke { position: absolute; left: 8px; top: 24px; width: 160px; height: 2px; background: #2f2f2f; }
.picks { display: flex; gap: 4px; }
.picks button { width: 48px; height: 48px; font-size: 24px; padding-top: 2px; }
.dir { margin-left: 12px; width: 32px; }
.sub { margin: 0; font: 600 22px/26px "Open Sans", "Noto Sans", sans-serif; display: flex; align-items: center; justify-content: flex-start; padding-left: 226px; }
.winding { height: 76px; padding-top: 18px; }
.toggle { padding: 0; margin-bottom: 6px; }
.sw { display: flex; align-items: center; gap: 7px; font-family: "Open Sans", "Noto Sans", sans-serif; font-size: 22px; font-weight: 300; }
.sw input { appearance: none; margin: 0; width: 96px; height: 42px; border: 2px solid #b0b0b0; background: linear-gradient(90deg, #fff 52px, #b0b0b0 52px 54px, #35cbe4 54px); }
.sw label { padding-top: 2px; }
.band { margin: 37px 0 4px; height: 50px; padding: 2px 0 0 226px; background: #cbcbcb; font-size: 23px; font-weight: 400; display: flex; align-items: center; }
.band svg, .sub svg { width: 20px; height: 14px; margin: 0 7px 6px -27px; fill: none; stroke: currentColor; stroke-width: 3; }
.coords { align-items: start; }
.coords .lab { padding-top: 9px; }
.b2 { margin: 34px 0 4px; }
.xy { display: flex; border: 2px solid #b0b0b0; background: #fff; height: 94px; }
.xy > button { width: 40px; flex: none; }
.pin { width: 24px; height: 24px; }
.pair { flex: 1; min-width: 0; border-left: 2px solid #b0b0b0; }
.co { display: flex; height: 45px; }
.co + .co { border-top: 2px solid #b0b0b0; }
.co label { width: 28px; flex: none; background: #f2f2f2; text-align: center; padding-top: 10px; }
.co input { flex: 1; width: 100px; min-width: 0; border: 0; padding: 4px 10px 0; font: inherit; color: inherit; background: none; outline: 0; }
.view { height: 69px; padding-top: 26px; }

.hint { display: flex; align-items: center; flex: none; height: 47px; border-top: 2px solid #676767; padding: 0 13px 0 8px; gap: 6px; }
.hint .ic { width: 26px; height: 26px; }
.hint span { flex: 1; white-space: nowrap; }

/* model view */
.view3d { position: relative; flex: 1; min-width: 0; overflow: hidden; background: linear-gradient(#dcdcdc, #d3d3d5 18%, #c0c0c4 55%, #b1b1b6 78%, #a8a8b1); }
.scene { position: absolute; inset: 0; width: 100%; height: 100%; }
.edge { stroke: #0a0a0a; stroke-width: 1; fill: none; }
.plane-l, .helix { fill: none; }
.helix { stroke: #101010; stroke-width: 2; opacity: .6; }
.hidden-l { fill: none; stroke: #333; stroke-width: 1; stroke-dasharray: 12 4 2 4 2 4; }
.dim { stroke: #000; stroke-width: 1; fill: none; }
.dimtext { font-family: "Open Sans", sans-serif; font-weight: 400; }
.handle { fill: none; stroke: #0a96ff; stroke-width: 6; }
.triad { font: 26px "Liberation Serif", serif; }
.toolbar { position: relative; display: inline-flex; height: 52px; border-bottom: 2px solid #676767; border-right: 2px solid #676767; background: #f2f2f2; }
.handle-grip { width: 34px; border-right: 2px solid #676767; background: radial-gradient(circle at 2px 2px, #2f2f2f 2px, transparent 2px) 5px 9px / 6px 7px, #e4e4e4; background-clip: content-box, border-box; padding: 9px 5px 26px; background-repeat: repeat; }
.bar { display: flex; border-right: 2px solid #676767; margin-right: 2px; padding: 0 2px 0 0; }
.bar:nth-child(2) { padding: 0 2px; margin-right: 0; }
.bar:nth-child(3) { padding: 0 0 0 2px; }
.bar:nth-child(4), .bar:nth-child(5) { padding-right: 0; margin-right: 2px; }
.bar:nth-child(4) { gap: 1px; }
.bar:nth-child(6) { gap: 2px; }
.bar:nth-child(7) { padding: 0; }
.bar:last-child { border: 0; margin: 0; padding: 0 0 0 2px; }
.tb { width: 52px; height: 50px; }
.dd { width: 44px; height: 50px; }
.dd .tri { border-left-width: 9px; border-right-width: 9px; }
</style>
